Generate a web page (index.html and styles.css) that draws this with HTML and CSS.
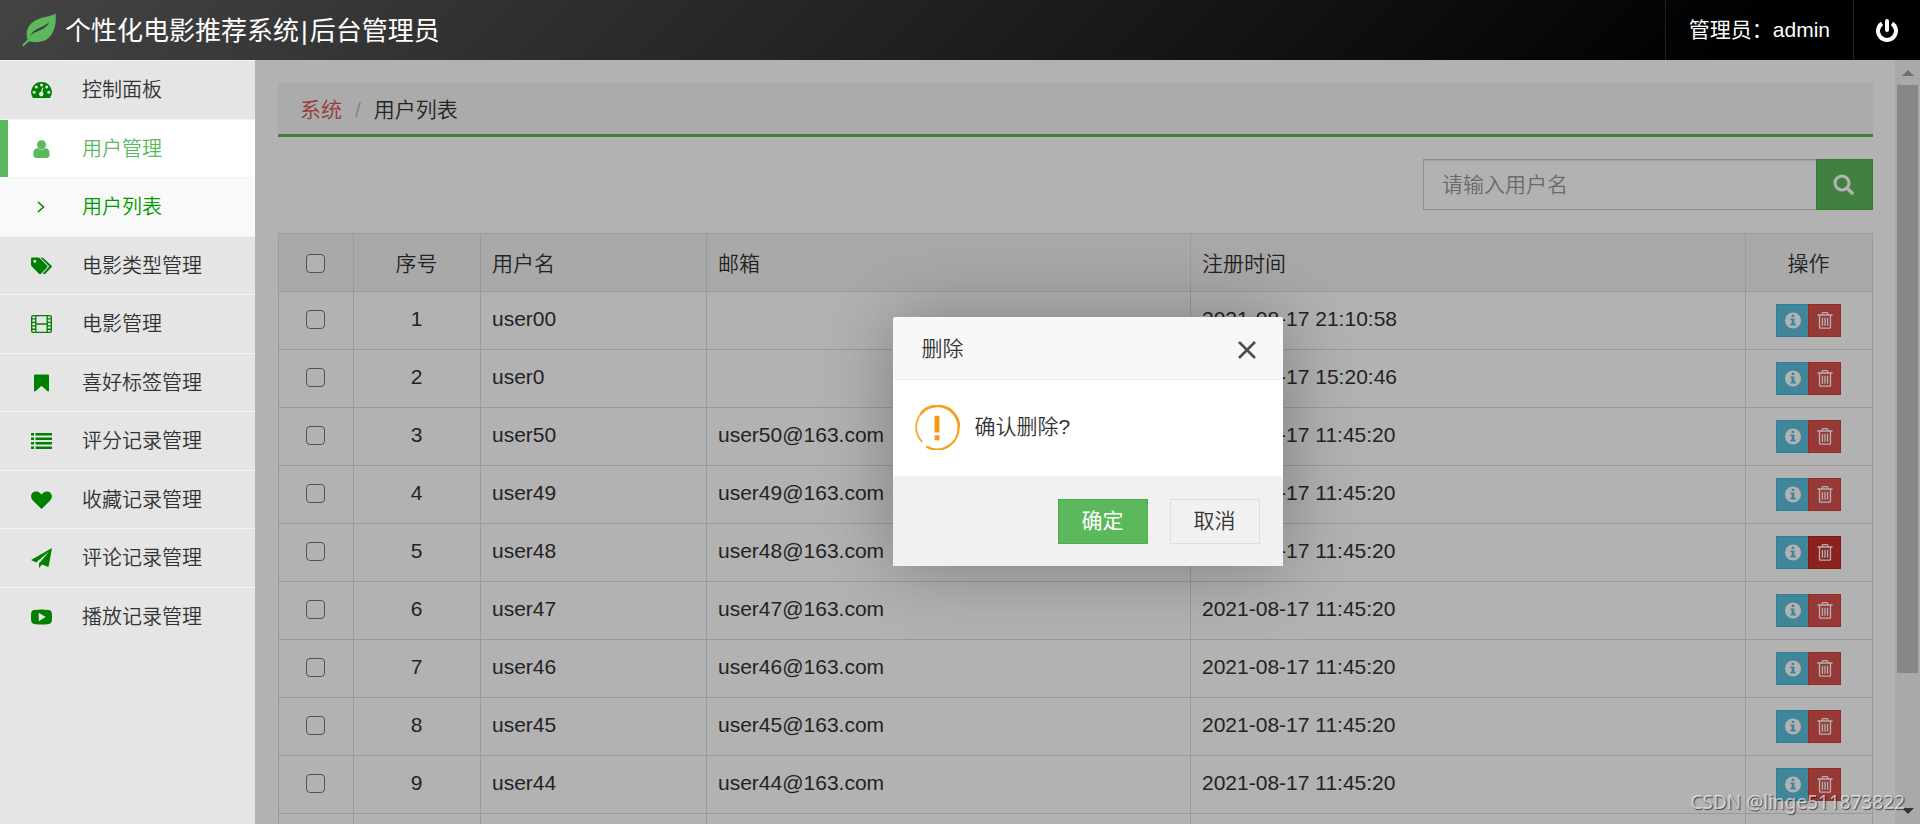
FILE: index.html
```html
<!DOCTYPE html>
<html lang="zh-CN">
<head>
<meta charset="utf-8">
<title>个性化电影推荐系统|后台管理员</title>
<link rel="stylesheet" href="styles.css">
</head>
<body>
<svg class="sprite" aria-hidden="true">
  <symbol id="i-info" viewBox="0 0 16 16"><path fill-rule="evenodd" d="M8 0a8 8 0 1 1 0 16A8 8 0 0 1 8 0zM6.700 2.300v2.200h2.600V2.300zM5.300 5.900v1.500h1.300v3.900H5.300v1.700h5.500v-1.700H9.400V5.900z"/></symbol>
  <symbol id="i-trash" viewBox="0 0 16 18"><path fill-rule="evenodd" d="M5.200 0h5.600l1.200 2.500h4v1.400h-1.500V16.200a1.600 1.600 0 0 1-1.600 1.600H3.100a1.600 1.600 0 0 1-1.600-1.600V3.900H0V2.500h4zM6 1.300l-.6 1.200h5.200L10 1.300zM2.900 3.900v12.200l.4.400h9.400l.4-.4V3.900zM4.600 6h1.400v8.500H4.600zm2.700 0h1.400v8.500H7.300zm2.700 0h1.400v8.500H10z"/></symbol>
</svg>
<header class="topbar">
  <div class="brand">
    <svg class="leaf" viewBox="0 0 34 34" aria-hidden="true"><path d="M33.500.5C28 4 20 3.500 12.500 8 5 12.500 3.500 20 5.600 26.500L0 32.300 1.300 33.600 7 28.200C13 30 21 29.500 26 25.500 33 20 34.500 9 33.500.5z" fill="#5cb85c"/><path d="M8 22.800C13 14.500 20 15.500 27.500 9 23 18 15 16.500 8 22.800z" fill="#404040"/></svg>
    <h1 class="brand-name">个性化电影推荐系统<span class="bar">|</span>后台管理员</h1>
  </div>
  <div class="account">管理员：admin</div>
  <button class="power" type="button" aria-label="退出">
    <svg width="22" height="23" viewBox="0 0 22 23" fill="none" stroke="#fff" stroke-width="4"><path d="M6 4.500a9 9 0 1 0 10 0"/><path d="M11 2v9" stroke-linecap="round"/></svg>
  </button>
</header>
<div class="layout">
  <nav class="sidebar">
    <ul class="menu">
      <li><a href="#"><svg viewBox="0 0 21 17"><path d="M10.500.5A10.200 10.200 0 0 0 2 16.500h17A10.200 10.200 0 0 0 10.500.5z"/><g fill="#e5e5e5"><circle cx="10.500" cy="3.600" r="1.500"/><circle cx="5.300" cy="5.600" r="1.500"/><circle cx="15.700" cy="5.600" r="1.500"/><circle cx="3.200" cy="10.700" r="1.500"/><circle cx="17.800" cy="10.700" r="1.500"/><path d="M11.300 6l1 .3-.9 4.300a2.300 2.300 0 1 1-1.400-.3z"/></g></svg>控制面板</a></li>
      <li class="active"><a href="#"><svg viewBox="0 0 21 18"><circle cx="10.500" cy="4.700" r="4.500"/><path d="M6.500 8a6 6 0 0 0 8 0c3 .4 4.200 3 4.200 6.600 0 1.800-1 3.400-2.900 3.400H5.200c-1.900 0-2.900-1.600-2.900-3.400C2.300 11 3.500 8.400 6.500 8z"/></svg>用户管理</a></li>
      <li class="sub"><a href="#"><svg viewBox="0 0 21 17" fill="none" stroke="green" stroke-width="1.500"><path d="M7 3.500l5.500 5-5.500 5"/></svg>用户列表</a></li>
      <li><a href="#"><svg viewBox="0 0 21 18"><path fill-rule="evenodd" d="M0 1.500Q0 .5 1 .5h6.200q1 0 1.700.7l7.100 7.200q1 1 0 2l-6 6.300q-1 .9-2 0L.8 9.500Q0 8.700 0 7.500zm3.800 1.200a1.500 1.500 0 1 0 0 3 1.500 1.500 0 0 0 0-3z"/><path d="M9.500.5h1.300q1 0 1.700.7l7.800 7.200q1 1 0 2l-6 6.300q-1 .9-2 .1l-.5-.6 6.500-6.800z"/></svg>电影类型管理</a></li>
      <li class="outline"><a href="#"><svg viewBox="0 0 22 19" fill="none" stroke="green" stroke-width="1.400"><rect x=".7" y=".7" width="20.600" height="17.600" rx="1.500"/><path d="M5 1v17M17 1v17M5 9.500h12M1 4.200h4M1 7.800h4M1 11.400h4M1 15h4M17 4.200h4M17 7.800h4M17 11.400h4M17 15h4"/></svg>电影管理</a></li>
      <li><a href="#"><svg viewBox="0 0 21 18"><path d="M3 1.500Q3 .5 4 .5h13q1 0 1 1v15q-.2 1.500-1.500.7l-6-5.400-6 5.400Q3.200 18 3 16.500z"/></svg>喜好标签管理</a></li>
      <li><a href="#"><svg viewBox="0 0 21 17"><path d="M0 .5h3v2.500H0zm4.500 0H21v2.500H4.500zM0 5h3v2.500H0zm4.500 0H21v2.500H4.500zM0 9.500h3V12H0zm4.500 0H21V12H4.500zM0 14h3v2.500H0zm4.500 0H21v2.500H4.500z"/></svg>评分记录管理</a></li>
      <li><a href="#"><svg viewBox="0 0 21 18"><path d="M10.500 18L2 9.800C-2 5 1 .5 5.300.5c2.500 0 4 1.500 5.200 3C11.700 2 13.200.5 15.700.5 20 .5 23 5 19 9.800z"/></svg>收藏记录管理</a></li>
      <li><a href="#"><svg viewBox="0 0 21 20"><path d="M21 0L0 12l5 2.500L18 3.500 8 15.500V20l3-3.500 6.500 2.500z"/></svg>评论记录管理</a></li>
      <li><a href="#"><svg viewBox="0 0 21 16"><path fill-rule="evenodd" d="M3 1Q10.500 0 18 1q2.500.2 2.800 3 .4 4 0 8-.3 2.800-2.800 3-7.500 1-15 0Q.5 14.800.2 12q-.4-4 0-8Q.5 1.200 3 1zm4.700 2.700v8.600l7-4.300z"/></svg>播放记录管理</a></li>
    </ul>
  </nav>
  <main class="main">
    <div class="page">
      <nav class="crumbs"><a href="#">系统</a><span class="slash">/</span><span>用户列表</span></nav>
      <form class="search">
        <input type="text" aria-label="用户名" placeholder="请输入用户名">
        <button type="button" aria-label="搜索"><svg width="21" height="21" viewBox="0 0 21 21" fill="none" stroke="#fff" stroke-width="3.200"><circle cx="9" cy="9" r="7"/><path d="M14 14l5 5" stroke-linecap="round" stroke-width="3.600"/></svg></button>
      </form>
      <table class="users">
        <colgroup><col class="c-check"><col class="c-no"><col class="c-name"><col class="c-mail"><col class="c-time"><col class="c-ops"></colgroup>
        <thead><tr><th class="mid"><input type="checkbox" aria-label="全选"></th><th class="mid">序号</th><th>用户名</th><th>邮箱</th><th>注册时间</th><th class="mid">操作</th></tr></thead>
        <tbody id="rows"></tbody>
      </table>
    </div>
    <div class="shade"></div>
    <div class="scrollbar" aria-hidden="true"><span class="up"></span><span class="thumb"></span><span class="down"></span></div>
    <section class="dialog" role="dialog" aria-label="删除">
      <div class="dialog-head"><h2>删除</h2><button type="button" aria-label="关闭"><svg width="20" height="20" viewBox="0 0 20 20" stroke="#4d4d57" stroke-width="2.600"><path d="M2 2l16 16M18 2L2 18"/></svg></button></div>
      <div class="dialog-body">
        <svg width="45" height="45" viewBox="0 0 46 46" aria-hidden="true"><path d="M7.500 38A21.500 21.500 0 0 1 7 8" fill="none" stroke="#f8ab38" stroke-width="1.900"/><path d="M6 9A22 22 0 0 1 45 23" fill="none" stroke="#f8a01c" stroke-width="2.900"/><path d="M44.500 22A22 22 0 0 1 11.500 42.500" fill="none" stroke="#f8a01c" stroke-width="2.300"/><path d="M20 11h5v17h-5zM20 31h5v5h-5z" fill="#f59a12"/></svg>
        <p>确认删除?</p>
      </div>
      <div class="dialog-foot"><button class="ok" type="button">确定</button><button class="cancel" type="button">取消</button></div>
    </section>
  </main>
</div>
<div class="watermark">CSDN @linge511873822</div>
<script src="app.js"></script>
</body>
</html>
```

FILE: styles.css
```css
* { box-sizing: border-box; }
body {
  margin: 0; height: 100vh; overflow: hidden; display: flex; flex-direction: column;
  font-family: "Liberation Sans", "Noto Sans CJK SC", sans-serif;
  font-size: 21px; line-height: 30px; color: #333; font-weight: 350;
}
h1, h2, p, ul { margin: 0; padding: 0; font-weight: inherit; }
button { padding: 0; border: 0; font: inherit; cursor: pointer; }
.sprite { position: absolute; width: 0; height: 0; }
.topbar { flex: none; height: 60px; display: flex; color: #fff; background: linear-gradient(135deg, #444, #000 90%); font-weight: 400; }
.brand { flex: 1; display: flex; align-items: center; gap: 9px; padding-left: 22px; }
.leaf { width: 34px; height: 34px; }
.brand-name { font-size: 26px; line-height: 30px; padding-top: 2px; }
.bar { padding: 0 2px; }
.account { padding: 0 23px; border-left: 1px solid #222; line-height: 60px; }
.power { width: 67px; border-left: 1px solid #222; background: none; display: flex; align-items: center; justify-content: center; }
.layout { flex: 1; min-height: 0; display: flex; }
.sidebar { width: 255px; flex: none; background: #e5e5e5; border-top: 1px solid #f4f4f4; }
.menu { list-style: none; font-size: 20px; }
.menu li { height: 58px; border-bottom: 1px solid #f4f4f4; }
.menu li:nth-child(odd) { height: 59px; }
.menu li:last-child { border-bottom: 0; }
.menu a { height: 100%; display: flex; align-items: center; gap: 30px; padding-left: 31px; color: #333; text-decoration: none; }
.menu svg { width: 21px; height: 20px; fill: green; flex: none; }
.menu .sub svg, .menu .outline svg { fill: none; }
.menu .active { background: #fff; }
.menu .active a { color: #5cb85c; border-left: 8px solid #5cb85c; padding-left: 23px; }
.menu .active svg { fill: #5cb85c; }
.menu .sub { background: #f9f9f9; }
.menu .sub a { color: #009a00; }
.main { position: relative; flex: 1; min-width: 0; overflow: hidden; background: #fff; }
.page { padding: 23px 47px 0 23px; }
.crumbs { height: 54px; padding: 2px 22px 0; display: flex; align-items: center; background: #f5f5f5; border-bottom: 3px solid #5cb85c; }
.crumbs a { color: #d9534f; text-decoration: none; }
.slash { padding: 0 13px; color: #bbb; }
.search { display: flex; justify-content: flex-end; margin: 22px 0 23px; }
.search input { width: 393px; height: 51px; padding: 0 18px; border: 1px solid #ccc; border-right: 0; font: inherit; background: #fff; box-shadow: inset 0 1px 1px rgba(0,0,0,.08); }
.search input::placeholder { color: #999; }
.search button { width: 57px; padding-right: 2px; background: #5cb85c; border: 1px solid #4cae4c; display: flex; align-items: center; justify-content: center; }
.users { width: 100%; table-layout: fixed; border-collapse: collapse; }
.c-check { width: 75px; } .c-no { width: 127px; } .c-name { width: 226px; } .c-mail { width: 484px; } .c-ops { width: 127px; }
.users th, .users td { height: 58px; padding: 0 11px; border: 1px solid #ddd; text-align: left; font-weight: inherit; }
.users th { padding-top: 2px; }
.users td { padding-bottom: 3px; }
.users thead { background: #f2f2f2; }
.users .mid { text-align: center; padding-left: 0; padding-right: 1px; }
.users input { display: block; margin: 0 auto; width: 19px; height: 19px; appearance: none; border: 1px solid #767676; border-radius: 4px; background: #fff; }
.users th.pick, .users td.tools { padding-top: 0; padding-bottom: 0; }
.ops { display: flex; justify-content: center; }
.ops button { width: 33px; height: 33px; display: flex; align-items: center; justify-content: center; color: #fff; }
.ops svg { width: 16px; height: 17px; fill: #fff; }
.ops .info { width: 32px; background: #5bc0de; border: 1px solid #46b8da; border-right: 0; }
.del { background: #d9534f; border: 1px solid #d43f3a; }
.del.hover { background: #c9302c; border-color: #ac2925; }
.shade { position: absolute; inset: 0; background: rgba(0,0,0,.3); }
.scrollbar { position: absolute; top: 0; right: 0; bottom: 0; width: 25px; background: #a9a9a9; display: flex; flex-direction: column; align-items: center; }
.up, .down { border: 6px solid transparent; }
.up { border-bottom-color: #6e6e6e; border-top: 0; margin: 10px 0 9px; }
.thumb { width: 21px; flex: none; height: 77%; background: #878787; }
.down { border-top-color: #333; border-bottom: 0; margin: auto 0 10px; }
.dialog { position: absolute; left: 50%; top: 257px; width: 390px; margin-left: -195px; border-radius: 3px; background: #fff; box-shadow: 1px 1px 75px rgba(0,0,0,.3); }
.dialog-head { height: 63px; padding: 2px 26px 0 29px; display: flex; align-items: center; justify-content: space-between; background: #f8f8f8; border-bottom: 1px solid #eee; border-radius: 3px 3px 0 0; }
.dialog-head h2 { font-size: 21px; }
.dialog-head button { background: none; display: flex; padding-top: 2px; }
.dialog-body { height: 96px; padding: 0 0 2px 22px; display: flex; align-items: center; gap: 15px; }
.dialog-foot { height: 90px; padding-right: 23px; display: flex; align-items: center; justify-content: flex-end; gap: 22px; background: #f1f1f1; }
.dialog-foot button { width: 90px; height: 45px; }
.ok { color: #fff; background: #5cb85c; border: 1px solid #4cae4c; font-weight: 400; }
.cancel { color: #333; background: #f1f1f1; border: 1px solid #dedede; }
.watermark { position: absolute; right: 15px; bottom: 6px; font: 19px/32px "Noto Sans", sans-serif; color: rgba(255,255,255,.65); text-shadow: 1px 1px 1px rgba(0,0,0,.6); }
```

FILE: app.js
```js
const users = [
  ["user00", "", "2021-08-17 21:10:58"],
  ["user0", "", "2021-08-17 15:20:46"],
];
for (let n = 50; n > 43; n--) {
  users.push(["user" + n, "user" + n + "@163.com", "2021-08-17 11:45:20"]);
}
const rows = users.map(([name, mail, time], i) => `
  <tr>
    <td class="mid"><input type="checkbox" aria-label="${name}"></td>
    <td class="mid">${i + 1}</td>
    <td>${name}</td>
    <td>${mail}</td>
    <td>${time}</td>
    <td class="mid tools"><div class="ops">
      <button class="info" type="button" aria-label="详情"><svg><use href="#i-info"/></svg></button>
      <button class="del${i === 4 ? " hover" : ""}" type="button" aria-label="删除"><svg><use href="#i-trash"/></svg></button>
    </div></td>
  </tr>`);
rows.push("<tr>" + "<td></td>".repeat(6) + "</tr>");
document.getElementById("rows").innerHTML = rows.join("");
```
